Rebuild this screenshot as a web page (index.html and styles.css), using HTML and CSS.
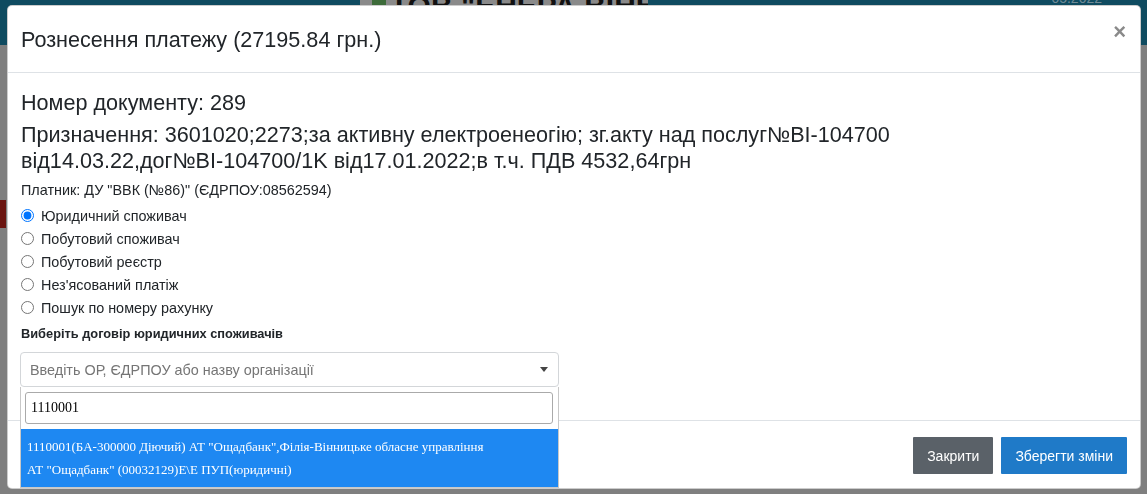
FILE: index.html
```html
<!DOCTYPE html>
<html lang="uk">
<head>
    <meta charset="UTF-8">
    <title>Рознесення платежу</title>
    <link rel="stylesheet" href="styles.css">
</head>
<body>
    <div class="page">
        <header class="topbar">
            <div class="brand"><span class="brand-mark"></span>ТОВ "ЕНЕРА ВІННИЦЯ"</div>
            <div class="topbar-date">05.2022</div>
        </header>
        <div class="page-side">
            <span class="side-badge"></span>
        </div>
    </div>

    <div class="modal">
        <div class="modal-header">
            <h5 class="modal-title">Рознесення платежу (27195.84 грн.)</h5>
            <button type="button" class="close">&times;</button>
        </div>

        <div class="modal-body">
            <h4 class="doc-number">Номер документу: 289</h4>
            <h4 class="doc-purpose">Призначення: 3601020;2273;за активну електроенеогію; зг.акту над послуг№BI-104700 <span class="nowrap">від14.03.22,дог№BI-104700/1K</span> від17.01.2022;в т.ч. ПДВ 4532,64грн</h4>
            <p class="payer">Платник: ДУ "ВВК (№86)" (ЄДРПОУ:08562594)</p>

            <div class="radio-list">
                <label class="radio"><input type="radio" name="kind" checked> Юридичний споживач</label>
                <label class="radio"><input type="radio" name="kind"> Побутовий споживач</label>
                <label class="radio"><input type="radio" name="kind"> Побутовий реєстр</label>
                <label class="radio"><input type="radio" name="kind"> Нез'ясований платіж</label>
                <label class="radio"><input type="radio" name="kind"> Пошук по номеру рахунку</label>
            </div>

            <label class="field-label">Виберіть договір юридичних споживачів</label>
            <div class="select-wrap">
                <div class="select-box">
                    <span class="select-placeholder">Введіть ОР, ЄДРПОУ або назву організації</span>
                    <span class="select-arrow"></span>
                </div>
                <div class="select-dropdown">
                    <div class="select-search">
                        <input type="text" value="1110001">
                    </div>
                    <ul class="select-results">
                        <li class="highlighted">1110001(БА-300000 Діючий) АТ "Ощадбанк",Філія-Вінницьке обласне управління АТ "Ощадбанк" (00032129)Е\Е ПУП(юридичні)</li>
                    </ul>
                </div>
            </div>
        </div>

        <div class="modal-footer">
            <button type="button" class="btn btn-secondary">Закрити</button>
            <button type="button" class="btn btn-primary">Зберегти зміни</button>
        </div>
    </div>
</body>
</html>
```

FILE: styles.css
```css
:root {
    --clr-backdrop: #7f7f7f;
    --clr-topbar: #0f4b60;
    --clr-card: #ffffff;
    --clr-border: #dee2e6;
    --clr-text: #212529;
    --clr-muted: #757575;
    --clr-primary: #1f7ac8;
    --clr-secondary: #5a6168;
    --clr-highlight: #1e88f2;
}

* {
    margin: 0;
    padding: 0;
    box-sizing: border-box;
}

body {
    font-family: "Liberation Sans", Arial, sans-serif;
    background: var(--clr-backdrop);
    color: var(--clr-text);
    width: 1147px;
    height: 494px;
    overflow: hidden;
}

/* Dimmed page behind the modal */
.topbar {
    height: 45px;
    background: var(--clr-topbar);
    position: relative;
}

.brand {
    position: absolute;
    left: 360px;
    top: -14px;
    width: 288px;
    height: 40px;
    background: #8a8a8a;
    font-size: 30px;
    font-weight: 700;
    line-height: 40px;
    color: #111;
    padding-left: 30px;
    white-space: nowrap;
    overflow: hidden;
}

.brand-mark {
    position: absolute;
    left: 12px;
    top: 12px;
    width: 14px;
    height: 14px;
    background: #3d6b3a;
}

.topbar-date {
    position: absolute;
    right: 45px;
    top: -10px;
    font-size: 14px;
    line-height: 16px;
    color: #6f8a96;
}

.side-badge {
    position: absolute;
    left: 0;
    top: 200px;
    width: 6px;
    height: 28px;
    background: #6b1410;
}

/* Modal */
.modal {
    position: fixed;
    top: 5px;
    left: 7px;
    width: 1134px;
    background: var(--clr-card);
    border: 1px solid rgba(0, 0, 0, 0.2);
    border-radius: 5px;
}

.modal-header {
    display: flex;
    align-items: flex-start;
    justify-content: space-between;
    padding: 19px 13px 17px 13px;
    border-bottom: 1px solid var(--clr-border);
}

.modal-title {
    font-size: 21.6px;
    font-weight: 400;
    line-height: 30px;
}

.close {
    border: none;
    background: none;
    font-family: inherit;
    font-size: 22px;
    font-weight: 700;
    line-height: 22px;
    color: #8a8a8a;
    padding: 0 1px 0 0;
    margin-top: -4px;
    cursor: pointer;
}

.modal-body {
    padding: 17px 13px 33px 13px;
}

.doc-number {
    font-size: 21.6px;
    font-weight: 400;
    line-height: 26px;
}

.doc-purpose {
    font-size: 21.6px;
    font-weight: 400;
    line-height: 26px;
    margin-top: 6px;
}

.nowrap {
    white-space: nowrap;
}

.payer {
    font-size: 14.4px;
    line-height: 18px;
    margin-top: 7px;
}

.radio-list {
    display: flex;
    flex-direction: column;
    margin-top: 5px;
}

.radio {
    display: flex;
    align-items: center;
    gap: 7px;
    height: 23px;
    font-size: 14.4px;
}

.radio input {
    width: 13px;
    height: 13px;
    margin: 0;
}

.field-label {
    display: block;
    font-size: 12.8px;
    font-weight: 700;
    line-height: 18px;
    margin-top: 6px;
}

.select-wrap {
    position: relative;
    width: 539px;
    margin: 9px 0 0 -1px;
}

.select-box {
    height: 35px;
    border: 1px solid #d3d6d9;
    border-radius: 4px;
    display: flex;
    align-items: center;
    justify-content: space-between;
    padding: 0 10px 0 9px;
}

.select-placeholder {
    font-size: 14.4px;
    color: var(--clr-muted);
}

.select-arrow {
    width: 0;
    height: 0;
    border-left: 4px solid transparent;
    border-right: 4px solid transparent;
    border-top: 5px solid #444;
}

.select-dropdown {
    position: absolute;
    left: 0;
    top: 35px;
    width: 100%;
    background: var(--clr-card);
    border: 1px solid #c8c8c8;
    border-top: none;
}

.select-search {
    padding: 5px 5px 5px 4px;
}

.select-search input {
    width: 100%;
    height: 32px;
    border: 1px solid #aaa;
    border-radius: 3px;
    padding: 0 5px;
    font-family: "Liberation Serif", "Times New Roman", serif;
    font-size: 14px;
    color: #000;
}

.select-results {
    list-style: none;
}

.select-results li {
    font-family: "Liberation Serif", "Times New Roman", serif;
    font-size: 13px;
    line-height: 23px;
    padding: 6px 60px 6px 6px;
}

.select-results .highlighted {
    background: var(--clr-highlight);
    color: #fff;
}

.modal-footer {
    display: flex;
    justify-content: flex-end;
    gap: 8px;
    padding: 16px 13px 14px 13px;
    border-top: 1px solid var(--clr-border);
}

.btn {
    height: 37px;
    border: none;
    border-radius: 1px;
    font-family: inherit;
    font-size: 14px;
    color: #fff;
    padding: 0 14px;
    cursor: pointer;
}

.btn-secondary {
    background: var(--clr-secondary);
}

.btn-primary {
    background: var(--clr-primary);
}
```
